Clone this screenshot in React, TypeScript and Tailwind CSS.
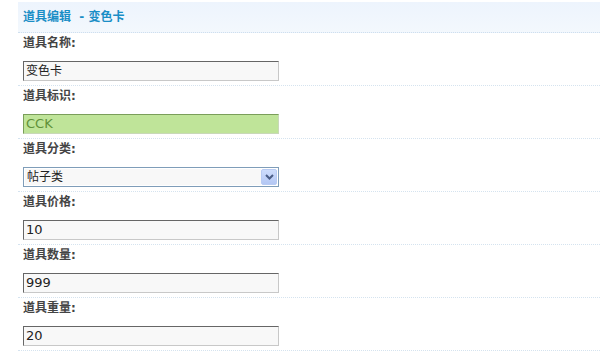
const cjk = '"DejaVu Sans", "Noto Sans CJK SC", sans-serif';

type Field = {
  label: string;
  value: string;
  kind?: "text" | "ok" | "select";
  latin?: boolean;
};

const fields: Field[] = [
  { label: "道具名称:", value: "变色卡" },
  { label: "道具标识:", value: "CCK", kind: "ok", latin: true },
  { label: "道具分类:", value: "帖子类", kind: "select" },
  { label: "道具价格:", value: "10", latin: true },
  { label: "道具数量:", value: "999", latin: true },
  { label: "道具重量:", value: "20", latin: true },
];

const Chevron = () => (
  <svg width="9" height="6" viewBox="0 0 9 6">
    <path d="M1 1 L4.5 4.5 L8 1" fill="none" stroke="#4a5d86" strokeWidth="2" />
  </svg>
);

const Input = ({ value, kind, latin }: { value: string; kind?: Field["kind"]; latin?: boolean }) => {
  if (kind === "select") {
    return (
      <div className="w-[256px] h-[20px] border border-[#7f9db9] bg-white flex items-center p-[1px]">
        <div className="flex-1 h-full bg-[#f8f8f8] pl-[2px] text-[12px] leading-[16px] text-[#222]">
          {value}
        </div>
        <div className="w-[16px] h-[16px] rounded-[2px] bg-gradient-to-b from-[#cddcfc] to-[#b4c7f4] border border-[#b8cbf3] flex items-center justify-center">
          <Chevron />
        </div>
      </div>
    );
  }
  const ok = kind === "ok";
  const size = latin ? "text-[13px]" : "text-[12px]";
  return (
    <div
      className={
        ok
          ? `w-[256px] h-[20px] border-t border-l border-[#7a9e5a] border-r border-b border-r-[#c8d8b8] border-b-[#c8d8b8] bg-[#bfe499] pl-[2px] ${size} leading-[18px] text-[#5f9138]`
          : `w-[256px] h-[20px] border-t border-l border-[#666] border-r border-b border-r-[#c8c8c8] border-b-[#c8c8c8] bg-[#f8f8f8] pl-[2px] ${size} leading-[18px] text-[#222]`
      }
    >
      {value}
    </div>
  );
};

export default function App() {
  return (
    <div className="w-[600px] h-[352px] bg-white overflow-hidden pt-[2px] pl-[18px]" style={{ fontFamily: cjk }}>
      <div className="h-[31px] bg-gradient-to-b from-[#edf4fd] to-[#f3f8fd] border-b border-dotted border-[#cfdfee] pl-[5px] flex items-center">
        <span className="text-[12px] font-bold text-[#1a8ec6] whitespace-pre">道具编辑  - 变色卡</span>
      </div>
      {fields.map((f) => (
        <div key={f.label} className="border-b border-dotted border-[#d5e3ef] pl-[5px] pt-[1px] pb-[4px]">
          <div className="h-[18px] leading-[18px] text-[12px] font-bold text-[#444]">{f.label}</div>
          <div className="mt-[9px]">
            <Input value={f.value} kind={f.kind} latin={f.latin} />
          </div>
        </div>
      ))}
    </div>
  );
}
